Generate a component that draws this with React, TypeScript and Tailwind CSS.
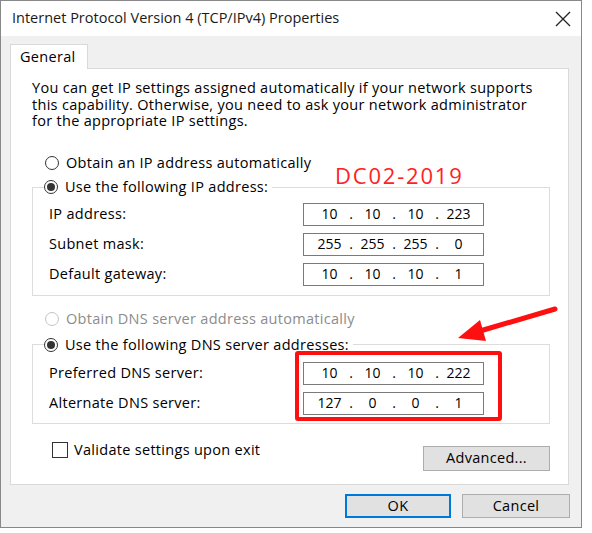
import React from "react";

function Radio({ checked = false, disabled = false }: { checked?: boolean; disabled?: boolean }) {
  return (
    <span
      className={`flex h-[14px] w-[14px] shrink-0 items-center justify-center rounded-full border bg-white ${
        disabled ? "border-[#c4c4c4]" : "border-[#333333]"
      }`}
    >
      {checked && <span className="h-[8px] w-[8px] rounded-full bg-[#333333]" />}
    </span>
  );
}

function IpField({ parts }: { parts: string[] }) {
  return (
    <div className="flex h-[23px] w-[181px] items-center border border-[#7a7a7a] bg-white pl-[7px] text-[14px] tracking-normal">
      {parts.map((p, i) => (
        <React.Fragment key={i}>
          {i > 0 && <span className="w-[6px] text-center">.</span>}
          <span className="w-[37px] text-center">{p}</span>
        </React.Fragment>
      ))}
    </div>
  );
}

function FieldRow({ label, parts, className = "" }: { label: string; parts: string[]; className?: string }) {
  return (
    <div className={`flex items-center justify-between pl-[16px] pr-[65px] ${className}`}>
      <span>{label}</span>
      <IpField parts={parts} />
    </div>
  );
}

export default function App() {
  return (
    <div
      className="relative h-[533px] w-[592px] bg-white text-[14.5px] leading-[16.5px] tracking-[0.3px] text-black"
      style={{ fontFamily: '"Open Sans", "Noto Sans", sans-serif' }}
    >
      <div className="flex h-[528px] w-[582px] flex-col border border-[#888888] bg-[#f0f0f0]">
        {/* Title bar */}
        <div className="flex h-[35px] items-center justify-between bg-white pl-[11px] pr-[10px]">
          <span className="text-[14.5px] tracking-normal text-[#1a1a1a]">
            Internet Protocol Version 4 (TCP/IPv4) Properties
          </span>
          <svg width="16" height="16" viewBox="0 0 16 16" className="text-[#222]">
            <path d="M1 1 L15 15 M15 1 L1 15" stroke="currentColor" strokeWidth="1.3" />
          </svg>
        </div>

        <div className="px-[9px] pt-[8px]">
          {/* Tab */}
          <div className="relative z-10 -mb-px flex h-[25px] w-[78px] items-center border border-b-0 border-[#d9d9d9] bg-white pl-[9px]">
            General
          </div>

          {/* Panel */}
          <div className="flex h-[417px] w-[559px] flex-col border border-[#d9d9d9] bg-white pl-[21px] pr-[18px] pt-[11px]">
            <p className="whitespace-nowrap">
              You can get IP settings assigned automatically if your network supports
              <br />
              this capability. Otherwise, you need to ask your network administrator
              <br />
              for the appropriate IP settings.
            </p>

            <div className="mt-[25px] flex items-center gap-[7px] pl-[13px]">
              <Radio />
              <span>Obtain an IP address automatically</span>
            </div>

            <fieldset className="mt-[8px] h-[117px] w-[518px] border border-[#dcdcdc]">
              <legend className="ml-[11px] flex items-center gap-[7px] bg-white pr-[4px]">
                <Radio checked />
                <span>Use the following IP address:</span>
              </legend>
              <FieldRow className="mt-[7px]" label="IP address:" parts={["10", "10", "10", "223"]} />
              <FieldRow className="mt-[7px]" label="Subnet mask:" parts={["255", "255", "255", "0"]} />
              <FieldRow className="mt-[7px]" label="Default gateway:" parts={["10", "10", "10", "1"]} />
            </fieldset>

            <div className="mt-[15px] flex items-center gap-[7px] pl-[13px] text-[#8c8c8c]">
              <Radio disabled />
              <span>Obtain DNS server address automatically</span>
            </div>

            <fieldset className="mt-[9px] h-[87px] w-[518px] border border-[#dcdcdc]">
              <legend className="ml-[11px] flex items-center gap-[7px] bg-white pr-[4px]">
                <Radio checked />
                <span>Use the following DNS server addresses:</span>
              </legend>
              <FieldRow className="mt-[9px]" label="Preferred DNS server:" parts={["10", "10", "10", "222"]} />
              <FieldRow className="mt-[7px]" label="Alternate DNS server:" parts={["127", "0", "0", "1"]} />
            </fieldset>

            <div className="mt-[22px] flex items-start justify-between">
              <div className="mt-[-4px] flex items-center gap-[6px] pl-[20px]">
                <span className="h-[16px] w-[16px] border border-[#333333] bg-white" />
                <span>Validate settings upon exit</span>
              </div>
              <button className="h-[25px] w-[127px] border border-[#adadad] bg-[#e1e1e1]">Advanced...</button>
            </div>
          </div>
        </div>

        {/* Bottom buttons */}
        <div className="mt-[9px] flex justify-end gap-[11px] pr-[11px]">
          <button className="h-[24px] w-[106px] border-2 border-[#0078d7] bg-[#e1e1e1]">OK</button>
          <button className="h-[24px] w-[108px] border border-[#adadad] bg-[#e1e1e1]">Cancel</button>
        </div>
      </div>

      {/* Annotations */}
      <span className="absolute left-[335px] top-[162px] text-[22px] leading-[26px] tracking-[1.8px] text-[#ff2222]">
        DC02-2019
      </span>
      <div className="absolute left-[295px] top-[351px] h-[70px] w-[207px] rounded-[3px] border-4 border-[#ff1010]" />
      <svg className="absolute left-0 top-0" width="592" height="533" viewBox="0 0 592 533">
        <line x1="555" y1="309" x2="480" y2="331" stroke="#ff1010" strokeWidth="5" strokeLinecap="round" />
        <polygon points="458,338 480,320 486,341" fill="#ff1010" />
      </svg>
    </div>
  );
}
